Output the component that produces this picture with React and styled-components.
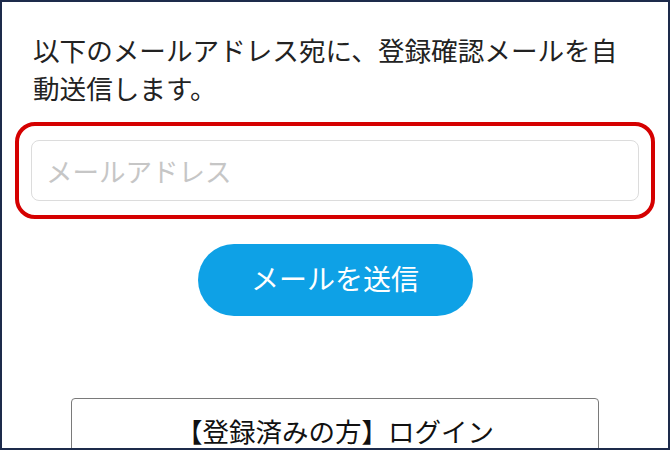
import styled, { createGlobalStyle } from "styled-components"

const GlobalStyle = createGlobalStyle`
html, body {
  margin: 0;
  padding: 0;
  background: #ffffff;
}
`

const Frame = styled.div`
width: 670px;
height: 450px;
box-sizing: border-box;
border: 2px solid #1d2b4b;
overflow: hidden;
background: #ffffff;
font-family: "Noto Sans CJK JP", "Noto Sans", sans-serif;
display: flex;
flex-direction: column;
align-items: center;
& > * {
  flex-shrink: 0;
}
`

const Lead = styled.p`
align-self: flex-start;
width: 600px;
margin: 29px 0 0 31px;
font-size: 26.6px;
line-height: 38px;
color: #222222;
`

const Highlight = styled.div`
box-sizing: border-box;
width: 640px;
height: 97px;
margin-top: 15px;
border: 4px solid #d50000;
border-radius: 20px;
padding: 14px 12px;
`

const EmailInput = styled.input`
box-sizing: border-box;
width: 100%;
height: 61px;
border: 1px solid #dcdcdc;
border-radius: 8px;
padding: 0 14px;
font-family: inherit;
font-size: 26.5px;
color: #222;
outline: none;
&::placeholder {
  color: #c6c6c6;
}
`

const SendButton = styled.button`
width: 275px;
height: 72px;
margin-top: 25px;
border: none;
border-radius: 36px;
background: #0ea1e6;
color: #ffffff;
font-family: inherit;
font-size: 28px;
padding: 0 0 4px 0;
cursor: pointer;
`

const LoginButton = styled.button`
width: 528px;
height: 70px;
margin-top: 82px;
border: 1px solid #7a7a7a;
border-radius: 4px;
background: #ffffff;
color: #111111;
font-family: inherit;
font-size: 26.5px;
padding: 0 0 6px 0;
cursor: pointer;
`

const App = () => {
  return (
    <>
      <GlobalStyle />
      <Frame>
        <Lead>以下のメールアドレス宛に、登録確認メールを自動送信します。</Lead>
        <Highlight>
          <EmailInput type="email" placeholder="メールアドレス" />
        </Highlight>
        <SendButton>メールを送信</SendButton>
        <LoginButton>【登録済みの方】ログイン</LoginButton>
      </Frame>
    </>
  )
}
export default App
